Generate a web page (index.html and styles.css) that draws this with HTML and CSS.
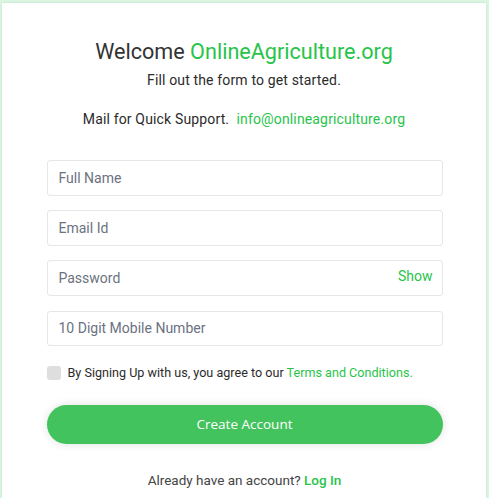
FILE: index.html
```html
<!DOCTYPE html>
<html>
<head>
<meta charset="utf-8">
<link rel="stylesheet" href="styles.css">
</head>
<body>
<div class="card">
  <h1 class="title">Welcome <span class="green">OnlineAgriculture.org</span></h1>
  <p class="subtitle">Fill out the form to get started.</p>
  <p class="support">Mail for Quick Support. &nbsp;<a class="green" href="#">info@onlineagriculture.org</a></p>
  <form class="form">
    <div class="field"><input type="text" placeholder="Full Name"></div>
    <div class="field"><input type="text" placeholder="Email Id"></div>
    <div class="field"><input type="password" placeholder="Password"><span class="show">Show</span></div>
    <div class="field"><input type="text" placeholder="10 Digit Mobile Number"></div>
    <label class="agree"><span class="check"></span><span>By Signing Up with us, you agree to our <a class="green" href="#">Terms and Conditions.</a></span></label>
    <button type="button" class="btn">Create Account</button>
    <p class="login">Already have an account? <a class="green strong" href="#">Log In</a></p>
  </form>
</div>
</body>
</html>
```
FILE: styles.css
```css
html, body {
  margin: 0;
  padding: 0;
  height: 100%;
}
body {
  background: #dcf5e2;
  font-family: Roboto, "Liberation Sans", Arial, sans-serif;
  color: #333;
  overflow: hidden;
}
.card {
  background: #fff;
  margin: 3px 3px 0 2px;
  min-height: 600px;
  box-shadow: 0 0 2px rgba(120, 210, 140, 0.4);
  padding: 36px 0 0;
  display: flex;
  flex-direction: column;
  align-items: center;
}
.green {
  color: #27c44a;
  text-decoration: none;
}
.strong { font-weight: 500; }
.title {
  margin: 0;
  font-size: 21.6px;
  line-height: 26px;
  font-weight: 400;
  color: #333;
}
.subtitle {
  margin: 5px 0 0;
  font-size: 14px;
  line-height: 20px;
  color: #2b2b2b;
  letter-spacing: 0.15px;
}
.support {
  margin: 19px 0 0;
  font-size: 14px;
  line-height: 20px;
  color: #2b2b2b;
  letter-spacing: 0.15px;
}
.form {
  margin-top: 31px;
  width: 396px;
  margin-left: 1px;
  display: flex;
  flex-direction: column;
}
.field {
  position: relative;
  margin-bottom: 14.4px;
}
.field input {
  box-sizing: border-box;
  width: 100%;
  height: 35.8px;
  border: 1px solid #e6e6e6;
  border-radius: 3px;
  padding: 0 11px;
  font-family: Roboto, "Liberation Sans", Arial, sans-serif;
  font-size: 14px;
  color: #333;
  outline: none;
}
.field input::placeholder {
  color: #6b7280;
}
.show {
  position: absolute;
  right: 10px;
  top: 7px;
  font-size: 14px;
  line-height: 18px;
  color: #27c44a;
}
.agree {
  display: flex;
  align-items: center;
  margin-top: 3px;
  font-size: 12.6px;
  line-height: 18px;
  color: #2b2b2b;
}
.check {
  width: 14px;
  height: 14px;
  border-radius: 3px;
  background: #dedede;
  margin-right: 7px;
  flex: none;
}
.btn {
  margin-top: 23px;
  height: 39px;
  border: none;
  border-radius: 20px;
  background: #43c35e;
  color: #fff;
  font-family: "Open Sans", "Noto Sans", sans-serif;
  font-size: 13.5px;
  box-shadow: 0 0 10px rgba(0, 0, 0, 0.12);
}
.login {
  margin: 26px 0 0;
  text-align: center;
  font-size: 13.5px;
  line-height: 20px;
  color: #444;
}
```
